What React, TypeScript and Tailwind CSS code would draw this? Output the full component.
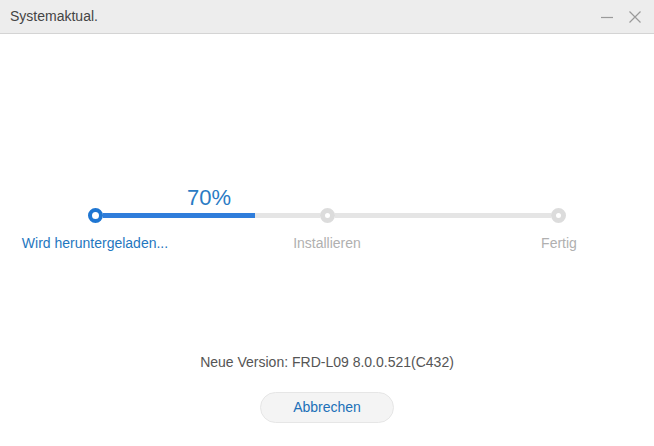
export default function App() {
  const font = { fontFamily: '"Liberation Sans", Arial, sans-serif' };
  return (
    <div className="flex h-[446px] w-[654px] flex-col bg-white" style={font}>
      <header className="flex h-[34px] shrink-0 items-center border-b border-[#d4d4d4] bg-[#ededed] pl-[10px] pr-[12px]">
        <span className="text-[14px] text-[#444]">Systemaktual.</span>
        <div className="ml-auto flex items-center gap-[14px]">
          <svg width="14" height="14" viewBox="0 0 14 14">
            <path d="M1 7.5h12" stroke="#9a9a9a" strokeWidth="1.2" />
          </svg>
          <svg width="14" height="14" viewBox="0 0 14 14">
            <path d="M1.5 1.5l11 11M12.5 1.5l-11 11" stroke="#9a9a9a" strokeWidth="1.2" />
          </svg>
        </div>
      </header>

      <main className="flex flex-1 flex-col">
        <div className="mt-[153px] pl-[187px] text-[22px] leading-none text-[#2a7bc4]">70%</div>

        <div className="ml-[88px] mt-[-1px] flex w-[478px] items-center">
          <div className="h-[15px] w-[15px] shrink-0 rounded-full border-[4px] border-[#1f76d2] bg-white" />
          <div className="flex h-[5px] flex-1 bg-[#e5e5e5]">
            <div className="h-full w-[152px] bg-[#2f7ddb]" />
          </div>
          <div className="h-[15px] w-[15px] shrink-0 rounded-full border-[5px] border-[#dcdcdc] bg-white" />
          <div className="h-[5px] flex-1 bg-[#e5e5e5]" />
          <div className="h-[15px] w-[15px] shrink-0 rounded-full border-[5px] border-[#dcdcdc] bg-white" />
        </div>

        <div className="ml-[15px] mt-[10px] flex w-[624px] justify-between text-[14px]">
          <span className="w-[160px] text-center text-[#1f77c0]">Wird heruntergeladen...</span>
          <span className="w-[160px] text-center text-[#b0b0b0]">Installieren</span>
          <span className="w-[160px] text-center text-[#b0b0b0]">Fertig</span>
        </div>

        <div className="mt-[98px] text-center text-[14px] text-[#555]">
          Neue Version: FRD-L09 8.0.0.521(C432)
        </div>

        <div className="mt-[19px] flex justify-center">
          <button className="h-[31px] w-[134px] rounded-full border border-[#e6e6e6] bg-[#f4f4f4] text-[14px] text-[#2070b8]">
            Abbrechen
          </button>
        </div>
      </main>
    </div>
  );
}
